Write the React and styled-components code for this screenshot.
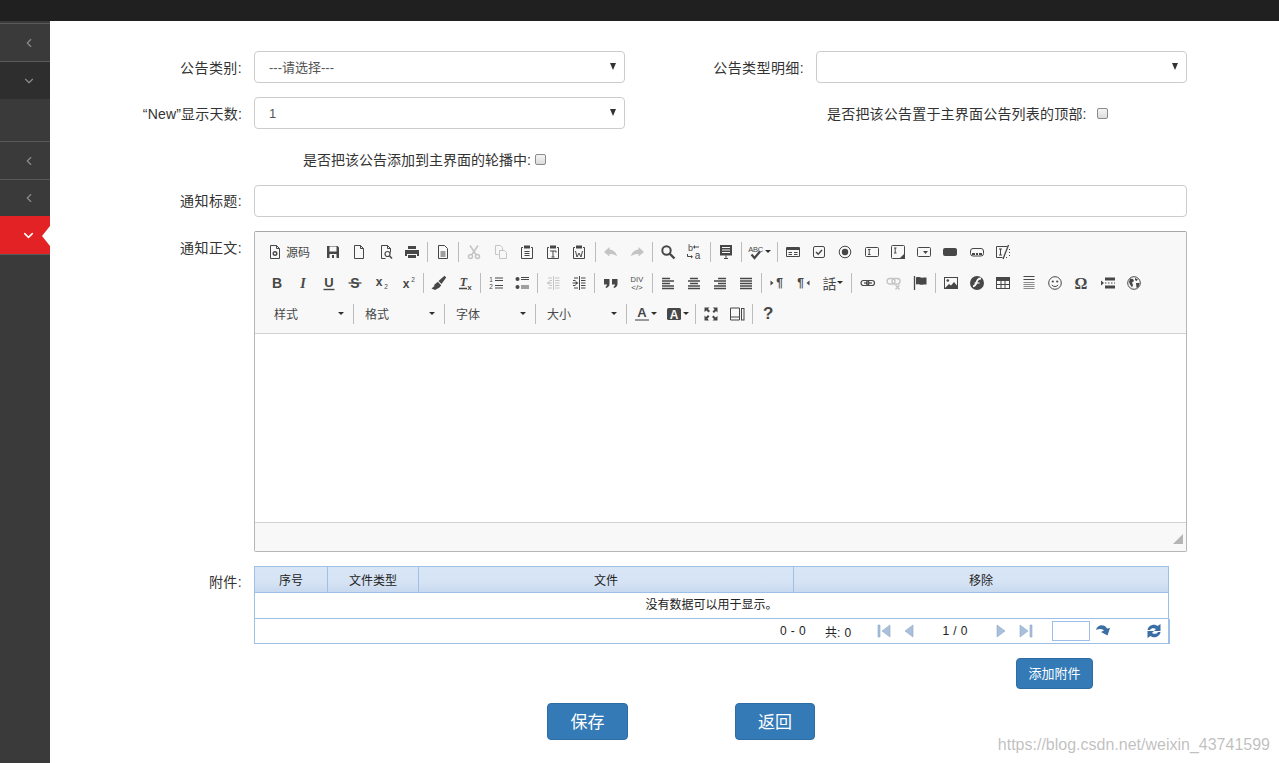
import React from "react";
import styled, { createGlobalStyle } from "styled-components";
import { ChevronLeft, ChevronDown } from "lucide-react";

const Global = createGlobalStyle`
  html, body { margin: 0; padding: 0; height: 763px; overflow: hidden; background: #fff; }
  body, input, select, button { font-family: "Liberation Sans", "Noto Sans CJK SC", sans-serif; }
`;

const Page = styled.div`position: relative; width: 1279px; height: 763px; display: flex; flex-direction: column; overflow: hidden;`;
const TopBar = styled.div`height: 21px; flex: none; background: #202020;`;
const Body = styled.div`flex: 1; display: flex; min-height: 0;`;
const Sidebar = styled.nav`width: 50px; flex: none; background: #3a3a3a; display: flex; flex-direction: column;`;
const SideCap = styled.div`height: 2px; background: #3a3a3a;`;
const SideItem = styled.a`
  height: ${p => p.$h || 38}px; flex: none; box-sizing: border-box; display: flex; align-items: center; justify-content: flex-end;
  padding-right: 14px; position: relative; color: ${p => p.$active ? "#fff" : "#8c8c8c"};
  background: ${p => p.$active ? "#e32226" : p.$open ? "#2e2e2e" : "#3a3a3a"};
  border-top: ${p => p.$active ? "0" : "1px solid #5a5a5a"};
  border-bottom: ${p => p.$active ? "1px solid #5a5a5a" : "0"};
`;
const SubPanel = styled.div`height: 42px; flex: none; background: #3a3a3a;`;
const Notch = styled.span`
  position: absolute; right: 0; top: 10px; width: 0; height: 0;
  border-top: 10px solid transparent; border-bottom: 10px solid transparent; border-right: 8px solid #fff;
`;

const Main = styled.main`flex: 1; padding: 30px 92px 0 0; box-sizing: border-box; display: flex; flex-direction: column;`;
const Row = styled.div`display: flex; align-items: ${p => p.$top ? "flex-start" : "center"}; margin-bottom: 14px; flex: none;`;
const Label = styled.label`
  width: ${p => p.$w || 192}px; flex: none; margin-right: 12px; text-align: right; font-size: 14px; color: #333; white-space: nowrap; letter-spacing: ${p => p.$ls ?? 0.4}px;
  padding-top: ${p => p.$pt || 0}px; padding-bottom: ${p => p.$pb || 0}px; box-sizing: border-box;
`;
const SelectWrap = styled.div`
  position: relative; width: 371px; height: 32px; flex: none;
  &::after { content: ""; position: absolute; right: 9px; top: 12px; border-left: 3.5px solid transparent; border-right: 3.5px solid transparent; border-top: 7px solid #333; pointer-events: none; }
`;
const Select = styled.select`
  appearance: none; width: 100%; height: 100%; box-sizing: border-box; border: 1px solid #ccc; border-radius: 4px; background: #fff;
  padding: 0 14px; font-size: 13px; color: #555; outline: none;
`;
const TextInput = styled.input`
  flex: 1; height: 32px; box-sizing: border-box; border: 1px solid #ccc; border-radius: 4px; background: #fff; outline: none; padding: 0 12px;
`;
const CheckLine = styled.div`
  display: flex; align-items: center; font-size: 14px; color: #333; white-space: nowrap;
  margin-left: ${p => p.$ml}px; letter-spacing: ${p => p.$ls || 0}px;
`;
const CarouselRow = styled(Row)`height: 28px; margin-top: 2px; margin-bottom: 12px;`;
const Check = styled.input.attrs({ type: "checkbox" })`
  appearance: none; width: 11px; height: 11px; margin: 0 0 0 ${p => p.$gap}px; box-sizing: border-box;
  border: 1px solid #8a8a8a; border-radius: 2px; background: linear-gradient(#f4f4f4, #dcdcdc);
`;

const Editor = styled.div`
  flex: 1; height: 321px; box-sizing: border-box; border: 1px solid #b6b6b6; border-top-color: #a8a8a8; border-radius: 2px;
  box-shadow: inset 1px 1px 0 #c8c8c8; display: flex; flex-direction: column; background: #fff;
`;
const Toolbar = styled.div`height: 102px; flex: none; box-sizing: border-box; background: #f8f8f8; border-bottom: 1px solid #d1d1d1; padding: 4px 0 0 9px;`;
const TRow = styled.div`
  height: 31px; display: flex; align-items: center; padding-left: ${p => p.$pl || 0}px;
  --bw: ${p => p.$bw || 26.1}px; --sw: ${p => p.$sw || 5.1}px;
`;
const TBtn = styled.span`
  width: ${p => p.$w ? p.$w + "px" : "var(--bw)"}; flex: none; height: 24px; display: flex; align-items: center; justify-content: ${p => p.$left ? "flex-start" : "center"};
  color: ${p => p.$off ? "#c4c4c4" : "#474747"}; font-size: 12px;
  padding-left: ${p => p.$left ? 3 : 0}px; box-sizing: border-box;
`;
const SourceText = styled.span`margin: 0 0 1px 3px;`;
const LangGlyph = styled.span`font-size: 14px;`;
const HelpGlyph = styled.span`font-size: 17px; font-weight: 700; line-height: 1;`;
const Sep = styled.span`
  width: var(--sw); flex: none; height: 20px; display: flex; justify-content: center;
  &::before { content: ""; width: 1px; background: #bcbcbc; }
`;
const Combo = styled.span`
  width: 86px; flex: none; height: 22px; box-sizing: border-box; padding: 0 7px 1px 9px; display: flex; align-items: center; justify-content: space-between;
  font-size: 12px; color: #484848;
`;
const Caret = styled.i`
  flex: none; width: 0; height: 0; margin-left: ${p => p.$ml ?? 3}px; border-left: 3px solid transparent; border-right: 3px solid transparent; border-top: 3px solid #2f2f2f;
`;
const Content = styled.div`flex: 1; background: #fff;`;
const EditorFoot = styled.div`
  height: 29px; flex: none; box-sizing: border-box; background: #f8f8f8; border-top: 1px solid #d1d1d1;
  display: flex; align-items: flex-end; justify-content: flex-end; padding: 0 3px 7px 0;
`;

const TableBox = styled.div`width: 915px; flex: none; border: 1px solid #9dbfe8; border-bottom: 0; box-sizing: border-box; font-size: 12px; color: #222;`;
const THead = styled.div`
  display: grid; grid-template-columns: 72px 91px 375px 1fr; height: 25px; background: linear-gradient(#d9e6f6, #d6e3f4 60%, #c8d9ef);
  border-bottom: 1px solid #9dbfe8;
`;
const Th = styled.div`display: flex; align-items: center; justify-content: center; color: #222; border-left: ${p => p.$first ? 0 : "1px solid #9dbfe8"};`;
const Empty = styled.div`height: 25px; box-sizing: content-box; padding: 0; display: flex; align-items: center; justify-content: center; background: #fff; border-bottom: 1px solid #9dbfe8; line-height: 23px;`;
const Pager = styled.div`
  height: 25px; width: 916px; margin-left: -1px; box-sizing: border-box; border: 1px solid #9dbfe8; border-top: 0;
  display: flex; align-items: center; padding-left: 525px; color: #222; word-spacing: .8px;
`;
const PagerCell = styled.span`width: ${p => p.$w}px; flex: none; display: flex; justify-content: ${p => p.$center ? "center" : "flex-start"}; align-items: center;`;
const PagerInput = styled.input`width: 38px; height: 20px; margin-left: 14px; box-sizing: border-box; border: 1px solid #9dbfe8; outline: none; background: #fff; padding: 0; flex: none;`;

const TableWrap = styled.div`display: flex; flex-direction: column;`;
const AttachRow = styled.div`display: flex; justify-content: flex-end; margin-bottom: 14px; width: 1043px; flex: none;`;
const Button = styled.button`
  height: ${p => p.$big ? 37 : 31}px; width: ${p => p.$w}px; flex: none; box-sizing: border-box; background: #337ab7; border: 1px solid #2e6da4; border-radius: 4px;
  color: #fff; font-size: ${p => p.$big ? 17 : 13}px; padding: 0 0 ${p => p.$big ? 3 : 2}px;
`;
const ActionRow = styled.div`display: flex; padding-left: 497px; gap: 107px; flex: none;`;
const Watermark = styled.div`
  position: absolute; right: 9px; top: 736px; font-size: 16px; color: rgba(150,150,150,.6); white-space: nowrap;
`;

const T = ({ x = 8, y = 12, s = 12, w = 700, i, f, children, ls }) => (
  <text x={x} y={y} fontSize={s} fontWeight={w} fontStyle={i ? "italic" : "normal"} textAnchor="middle" fill="currentColor" fontFamily={f || "Liberation Sans"} letterSpacing={ls}>{children}</text>
);
const L = ({ d, w = 1 }) => <path d={d} fill="none" stroke="currentColor" strokeWidth={w} />;
const F = ({ d }) => <path d={d} fill="currentColor" fillRule="evenodd" />;

const icons = {
  source: <><L d="M3.5 1.5h6l3 3v10h-9z" /><L d="M9.5 1.5v3h3" /><circle cx="8" cy="9.5" r="1.8" fill="none" stroke="currentColor" strokeWidth="1.4" /></>,
  save: <F d="M2 2h10.5L14 3.5V14H2zM4.5 7.5v-5h7v5zM4.5 10v4h7v-4zM7 11h2v3H7z" />,
  newdoc: <><L d="M3.5 1.5h6l3 3v10h-9z" /><L d="M9.5 1.5v3h3" /></>,
  preview: <><L d="M3.5 14.5v-13h6l3 3v4M9.5 1.5v3h3M3.5 14.5h4" /><circle cx="9.5" cy="10" r="2.5" fill="none" stroke="currentColor" strokeWidth="1.2" /><L d="M11.5 12l2.5 2.5" w={1.6} /></>,
  print: <F d="M4 2h8v3H4zM1 6h14v6h-2v-2H3v2H1zM4 11h8v3H4z" />,
  templates: <><L d="M3.5 1.5h6l3 3v10h-9z" /><L d="M5.5 8h5M5.5 10h5M5.5 12h5" /></>,
  cut: <><L d="M4 1.5l6 9M12 1.5l-6 9" w={1.6} /><circle cx="4.5" cy="12.5" r="2" fill="none" stroke="currentColor" strokeWidth="1.5" /><circle cx="11.5" cy="12.5" r="2" fill="none" stroke="currentColor" strokeWidth="1.5" /></>,
  copy: <><L d="M2.5 1.5h5l2 2v3M2.5 1.5v9h3" /><L d="M6.5 6.5h5l2 2v6h-7z" /></>,
  paste: <><L d="M4 3.5H2.5v11h11v-11H12" /><F d="M5 1.5h6v3H5z" /><L d="M5.5 7.5h5M5.5 9.5h5M5.5 11.5h5" /></>,
  pastet: <><L d="M4 3.5H2.5v11h11v-11H12" /><F d="M5 1.5h6v3H5z" /><L d="M5 7h6v1.5M8 7v6M6.5 13h3" /></>,
  pastew: <><L d="M4 3.5H2.5v11h11v-11H12" /><F d="M5 1.5h6v3H5z" /><L d="M4.5 7l1.5 6 2-4 2 4 1.5-6" /></>,
  undo: <F d="M6.5 3L1 8l5.5 4.5V10c3 0 5.5.5 7.5 2.5-.5-3.5-3-6.5-7.5-7z" />,
  redo: <F d="M9.5 3L15 8l-5.5 4.5V10c-3 0-5.5.5-7.5 2.5.5-3.5 3-6.5 7.5-7z" />,
  find: <><circle cx="6.5" cy="6.5" r="4.2" fill="none" stroke="currentColor" strokeWidth="2" /><L d="M9.5 9.5l5 5" w={2.4} /></>,
  replace: <><T x={4.5} y={7} s={9} w={400}>b</T><T x={11.5} y={15} s={10} w={400}>a</T><L d="M8 3h5M1.5 10v2.5h4" /><F d="M9 1v4L7 3zM5 11v3.5l2-1.75z" /></>,
  selectall: <><F d="M2 1h12v10.5H2z" /><path d="M4 3.5h8M4 6h8M4 8.5h8" stroke="#f8f8f8" strokeWidth="1" /><L d="M6 14.5h4M8 11.5v3" /></>,
  spell: <><T x={7.5} y={7.5} s={7.5} ls={-0.3} w={400}>ABC</T><L d="M3.5 10.5l3 3.5L12 7.5" w={2.2} /></>,
  form: <><L d="M1.5 3.5h13v9h-13z" /><F d="M2 4h12v2H2z" /><L d="M3.5 8.5h3.5M9 8.5h3.5M3.5 10.5h3.5M9 10.5h3.5" /></>,
  checkbox: <><rect x="2.5" y="2.5" width="11" height="11" rx="1.5" fill="none" stroke="currentColor" /><L d="M5 8l2.2 2.2L11 6" w={1.5} /></>,
  radio: <><circle cx="8" cy="8" r="5.8" fill="none" stroke="currentColor" /><circle cx="8" cy="8" r="3.2" fill="currentColor" /></>,
  textfield: <><rect x="1.5" y="3.5" width="13" height="9" rx="1" fill="none" stroke="currentColor" /><L d="M4 5.5h2.5M5.2 5.5v5M4 10.5h2.5" /></>,
  textarea: <><rect x="1.5" y="1.5" width="13" height="13" rx="1" fill="none" stroke="currentColor" /><L d="M4 4h2.5M5.2 4v5M4 9h2.5" /><F d="M15 9v6H9z" /></>,
  select: <><rect x="1.5" y="3.5" width="13" height="9" rx="1" fill="none" stroke="currentColor" /><F d="M7 7h5l-2.5 3z" /></>,
  button: <rect x="1" y="4" width="14" height="8" rx="2" fill="currentColor" />,
  imagebutton: <><rect x="1.5" y="4.5" width="13" height="7.5" rx="2.5" fill="none" stroke="currentColor" /><F d="M3 9h3v2H3zM7 9h2v2H7zM10 9h3v2h-3z" /></>,
  hidden: <><L d="M12 2.5H1.5v11h6" /><L d="M4 5h3M5.5 5v6M4 11h3" /><L d="M8 15L13.5 1" w={1.3} /><L d="M14.5 5v1M14.5 8v1M14.5 11v1M11 13.5h1" /></>,
  bold: <T s={14} y={13}>B</T>,
  italic: <T s={14} y={13} i w={700} f="Liberation Serif">I</T>,
  under: <><T s={13} y={11.5}>U</T><L d="M2.5 14.5h11" w={1.4} /></>,
  strike: <><T s={14} y={13}>S</T><L d="M1.5 8h13" w={1.3} /></>,
  sub: <><T x={6} s={12} y={11}>x</T><T x={13} y={14} s={6.5} w={400}>2</T></>,
  sup: <><T x={6} s={12} y={13}>x</T><T x={13} y={7} s={6.5} w={400}>2</T></>,
  brush: <><F d="M13.5.8l1.7 1.7-4.7 6.5-3-3zM6.800 6.800l3.400 3.400L8.500 12.500 4 15l-3.500-1.500L3.500 11l-.5-1z" /></>,
  removeformat: <><T x={6.5} y={11} s={12} i f="Liberation Serif">T</T><L d="M2 13.5h8" w={1.5} /><T x={12.5} y={15} s={8}>x</T></>,
  ol: <><T x={3} y={6.5} s={6.5} w={400}>1</T><T x={3} y={14} s={6.5} w={400}>2</T><L d="M7 3h8M7 5.5h8M7 10.5h8M7 13h8" w={1.2} /></>,
  ul: <><circle cx="3.5" cy="4" r="2" fill="currentColor" /><circle cx="3.5" cy="12" r="2" fill="currentColor" /><L d="M7 2.5h8M7 4.5h8M7 11h8M7 13h8" w={1.2} /></>,
  outdent: <><L d="M8.5 1v14M10 3h4.5M10 5.5h4.5M10 8h4.5M10 10.5h4.5M10 13h4.5M3 3h4M3 13h4M4.5 5.5H7M4.5 10.5H7" /><F d="M1.500 8l3-2v4z" /><L d="M4 8h3" /></>,
  indent: <><L d="M8.5 1v14M10 3h4.5M10 5.5h4.5M10 8h4.5M10 10.5h4.5M10 13h4.5M3 3h4M3 13h4M2 5.5h2.5M2 10.5h2.5" /><F d="M7.500 8l-3-2v4z" /><L d="M1.5 8h3" /></>,
  quote: <><F d="M1 4h5.5v5c0 2-1.5 3.500-3.500 4l-.5-1.200C3.500 11.300 4 10.500 4 9.500H1zM9 4h5.500v5c0 2-1.500 3.500-3.500 4l-.5-1.200c1-.5 1.500-1.300 1.500-2.300H9z" /></>,
  div: <><T x={8} y={7} s={7.5} w={400} ls={0.2}>DIV</T><T x={8} y={14.5} s={8} w={400}>{"</>"}</T></>,
  left: <L d="M2 3.5h8M2 6h12M2 8.5h8M2 11h12M2 13.5h12" w={1.5} />,
  center: <L d="M4 3.5h8M2 6h12M4 8.5h8M2 11h12M2 13.5h12" w={1.5} />,
  right: <L d="M6 3.5h8M2 6h12M6 8.5h8M2 11h12M2 13.5h12" w={1.5} />,
  justify: <L d="M2 3.5h12M2 6h12M2 8.5h12M2 11h12M2 13.5h12" w={1.5} />,
  ltr: <><T x={10.5} y={12} s={12}>¶</T><F d="M1.5 5.5l3 2.5-3 2.5z" /></>,
  rtl: <><T x={5.5} y={12} s={12}>¶</T><F d="M14.5 5.5L11.5 8l3 2.5z" /></>,
  link: <><rect x="1" y="5.5" width="8" height="5" rx="2.5" fill="none" stroke="currentColor" strokeWidth="1.2" /><rect x="6.5" y="5.5" width="8" height="5" rx="2.5" fill="none" stroke="currentColor" strokeWidth="1.2" /><L d="M4 8h8" w={1.2} /></>,
  unlink: <><rect x="1" y="3.5" width="8" height="5.5" rx="2.7" fill="none" stroke="currentColor" strokeWidth="1.4" /><rect x="6" y="3.5" width="8" height="5.5" rx="2.7" fill="none" stroke="currentColor" strokeWidth="1.4" /><L d="M9.5 10l4 4.5M13.5 10l-4 4.5" w={1.3} /></>,
  anchor: <><L d="M2.5 1v14" w={1.3} /><F d="M4 2.5c3-1.5 4.5 1 7.5 0H14.5v7h-3c-3 1-4.5-1-7.5 0z" /></>,
  image: <><rect x="1.5" y="2.5" width="13" height="11" fill="none" stroke="currentColor" /><circle cx="4.8" cy="5.5" r="1.3" fill="currentColor" /><F d="M2 13l4-4 2 1.5L11 7l3 3.5V13z" /></>,
  flash: <><circle cx="8" cy="8" r="7" fill="currentColor" /><path d="M12 3.5C9 3.5 8 5.5 7.5 7.5S6 11 4 11.5" fill="none" stroke="#f8f8f8" strokeWidth="1.8" /><path d="M5.5 8h5" stroke="#f8f8f8" strokeWidth="1.2" /></>,
  table: <><F d="M1 2h14v12H1zM2 6v3h3.5V6zM6.5 6v3h3V6zM10.5 6v3H14V6zM2 10v3h3.500v-3zM6.500 10v3h3v-3zM10.500 10v3H14v-3z" /></>,
  hr: <><L d="M2.5 1.500h11M2.500 4.500h11" /><path d="M2.500 7.500h11M2.500 9.500h11M2.500 11.500h11M2.500 13.500h11" stroke="currentColor" opacity=".6" /></>,
  smiley: <><circle cx="8" cy="8" r="6.3" fill="none" stroke="currentColor" /><circle cx="5.8" cy="6.5" r="1.1" fill="currentColor" /><circle cx="10.2" cy="6.5" r="1.1" fill="currentColor" /><path d="M4.800 10c1.500 2 5 2 6.400 0" fill="none" stroke="currentColor" /></>,
  omega: <T y={13.5} s={16} f="Liberation Serif">Ω</T>,
  pagebreak: <><F d="M1 5.500l3 2.500-3 2.500zM5 2.500h10v3H5zM5 10.500h10v3H5z" /><L d="M5 8h1.500M8 8h1.500M11 8h1.500M14 8h1" /></>,
  iframe: <><circle cx="8" cy="8" r="6.3" fill="none" stroke="currentColor" /><F d="M4 3.500l3 .5 1 2-2 1.500 1 2.500-1 2.500-2-3L3 7zM9 3l3 1.500-1.500 1.500L9 5zM10 8l3.500 0-1 4-2 1z" /></>,
  maximize: <F d="M1.500 1.500h5L5 3l2 2-1.500 1.500-2-2-2 1.500zM14.500 1.500v5L13 5l-2 2-1.500-1.500 2-2L10 1.500zM1.500 14.500v-5L3 11l2-2 1.500 1.500-2 2 1.500 2zM14.500 14.500h-5L11 13l-2-2 1.500-1.500 2 2 2-1.500z" />,
  blocks: <><L d="M1.5 2h9v12h-9z" /><L d="M1.5 11h9" /><rect x="12.5" y="2.5" width="2.5" height="11.500" fill="none" stroke="currentColor" /></>,
};

const Ico = ({ n, s = 16 }) => <svg width={s} height={s} viewBox="0 0 16 16" aria-hidden="true">{icons[n]}</svg>;
const B = ({ n, off }) => <TBtn $off={off}><Ico n={n} /></TBtn>;

const row1 = ["s", "save", "newdoc", "preview", "print", "|", "templates", "|", "!cut", "!copy", "paste", "pastet", "pastew", "|", "!undo", "!redo", "|", "find", "replace", "|", "selectall", "|", "#spell", "|", "form", "checkbox", "radio", "textfield", "textarea", "select", "button", "imagebutton", "hidden"];
const row2 = ["bold", "italic", "under", "strike", "sub", "sup", "|", "brush", "removeformat", "|", "ol", "ul", "|", "!outdent", "indent", "|", "quote", "div", "|", "left", "center", "right", "justify", "|", "ltr", "rtl", "@lang", "|", "link", "!unlink", "anchor", "|", "image", "flash", "table", "hr", "smiley", "omega", "pagebreak", "iframe"];

const renderTool = (k, i) => {
  if (k === "|") return <Sep key={i} />;
  if (k === "s") return <TBtn key={i} $w={56} $left><Ico n="source" /><SourceText>源码</SourceText></TBtn>;
  if (k[0] === "#") return <TBtn key={i} $w={31}><Ico n={k.slice(1)} /><Caret $ml={1} /></TBtn>;
  if (k[0] === "@") return <TBtn key={i} $w={33}><LangGlyph>話</LangGlyph><Caret $ml={1} /></TBtn>;
  if (k[0] === "!") return <B key={i} n={k.slice(1)} off />;
  return <B key={i} n={k} />;
};

const Glyph = ({ d }) => <svg width="16" height="16" viewBox="0 0 16 16" aria-hidden="true"><path d={d} fill="#a9bfdc" stroke="#8ea9c9" strokeWidth=".6" /></svg>;

export default function App() {
  return (
    <Page>
      <Global />
      <TopBar />
      <Body>
        <Sidebar>
          <SideCap />
          <SideItem><ChevronLeft size={14} /></SideItem>
          <SideItem $open><ChevronDown size={14} /></SideItem>
          <SubPanel />
          <SideItem><ChevronLeft size={14} /></SideItem>
          <SideItem $h={37}><ChevronLeft size={14} /></SideItem>
          <SideItem $active $h={39}><ChevronDown size={15} strokeWidth={2.4} /><Notch /></SideItem>
        </Sidebar>
        <Main>
          <Row>
            <Label>公告类别:</Label>
            <SelectWrap><Select defaultValue="a"><option value="a">---请选择---</option></Select></SelectWrap>
            <Label $w={179}>公告类型明细:</Label>
            <SelectWrap><Select /></SelectWrap>
          </Row>
          <Row>
            <Label $ls={0.2}>“New”显示天数:</Label>
            <SelectWrap><Select defaultValue="1"><option value="1">1</option></Select></SelectWrap>
            <CheckLine $ml={202} $ls={0.2}>是否把该公告置于主界面公告列表的顶部:<Check $gap={10} /></CheckLine>
          </Row>
          <CarouselRow>
            <CheckLine $ml={253}>是否把该公告添加到主界面的轮播中:<Check $gap={4} /></CheckLine>
          </CarouselRow>
          <Row>
            <Label $pb={2}>通知标题:</Label>
            <TextInput />
          </Row>
          <Row $top>
            <Label $pt={6}>通知正文:</Label>
            <Editor>
              <Toolbar>
                <TRow $bw={26.25} $sw={5}>{row1.map(renderTool)}</TRow>
                <TRow>{row2.map(renderTool)}</TRow>
                <TRow $pl={1} $sw={5}>
                  <Combo>样式<Caret /></Combo><Sep />
                  <Combo>格式<Caret /></Combo><Sep />
                  <Combo>字体<Caret /></Combo><Sep />
                  <Combo>大小<Caret /></Combo><Sep />
                  <TBtn $w={32}><svg width="16" height="16" viewBox="0 0 16 16" aria-hidden="true"><T y={11} s={13}>A</T><path d="M1 14h14" stroke="#9a9a9a" strokeWidth="2" /></svg><Caret $ml={1} /></TBtn>
                  <TBtn $w={32}><svg width="16" height="16" viewBox="0 0 16 16" aria-hidden="true"><rect x="1" y="2" width="14" height="12" rx="1.5" fill="currentColor" /><text x="8" y="12.5" fontSize="12" fontWeight="700" textAnchor="middle" fill="#f8f8f8" fontFamily="Liberation Sans">A</text></svg><Caret $ml={1} /></TBtn>
                  <Sep />
                  <B n="maximize" />
                  <B n="blocks" />
                  <Sep />
                  <TBtn><HelpGlyph>?</HelpGlyph></TBtn>
                </TRow>
              </Toolbar>
              <Content />
              <EditorFoot>
                <svg width="10" height="10" viewBox="0 0 10 10" aria-hidden="true"><path d="M10 0v10H0z" fill="#b5b5b5" /></svg>
              </EditorFoot>
            </Editor>
          </Row>
          <Row $top>
            <Label $pt={5}>附件:</Label>
            <TableWrap>
              <TableBox>
                <THead>
                  <Th $first>序号</Th><Th>文件类型</Th><Th>文件</Th><Th>移除</Th>
                </THead>
                <Empty>没有数据可以用于显示。</Empty>
                <Pager>
                  <PagerCell $w={45}>0 - 0</PagerCell>
                  <PagerCell $w={46}>共: 0</PagerCell>
                  <PagerCell $w={25} $center><Glyph d="M2 2h2v12H2zM14 2v12L6 8z" /></PagerCell>
                  <PagerCell $w={25} $center><Glyph d="M12 2v12L4 8z" /></PagerCell>
                  <PagerCell $w={68} $center>1 / 0</PagerCell>
                  <PagerCell $w={24} $center><Glyph d="M4 2v12l8-6z" /></PagerCell>
                  <PagerCell $w={25} $center><Glyph d="M14 2h-2v12h2zM2 2v12l8-6z" /></PagerCell>
                  <PagerInput />
                  <PagerCell $w={25} $center><svg width="16" height="16" viewBox="0 0 16 16" aria-hidden="true"><path d="M1 7C2 1.500 9.500.5 12 5.500L15 5l-2.500 7.500L6 9l3-1.500C7 5.500 4 5.500 1 7z" fill="#3a6ea5" /></svg></PagerCell>
                  <PagerCell $w={31} />
                  <PagerCell $w={16} $center><svg width="16" height="16" viewBox="0 0 16 16" aria-hidden="true"><path d="M1.500 7C2 2.500 8 0 11.500 3L14.500 1v7H8l2-2C8 4.500 5 5 4 7zM14.500 9c-.5 4.500-6.500 7-10 4L1.500 15V8h6.500l-2 2c2 1.500 5 1 6-1z" fill="#3a6ea5" /></svg></PagerCell>
                </Pager>
              </TableBox>
            </TableWrap>
          </Row>
          <AttachRow><Button $w={77}>添加附件</Button></AttachRow>
          <ActionRow>
            <Button $big $w={81}>保存</Button>
            <Button $big $w={80}>返回</Button>
          </ActionRow>
        </Main>
      </Body>
      <Watermark>https://blog.csdn.net/weixin_43741599</Watermark>
    </Page>
  );
}
